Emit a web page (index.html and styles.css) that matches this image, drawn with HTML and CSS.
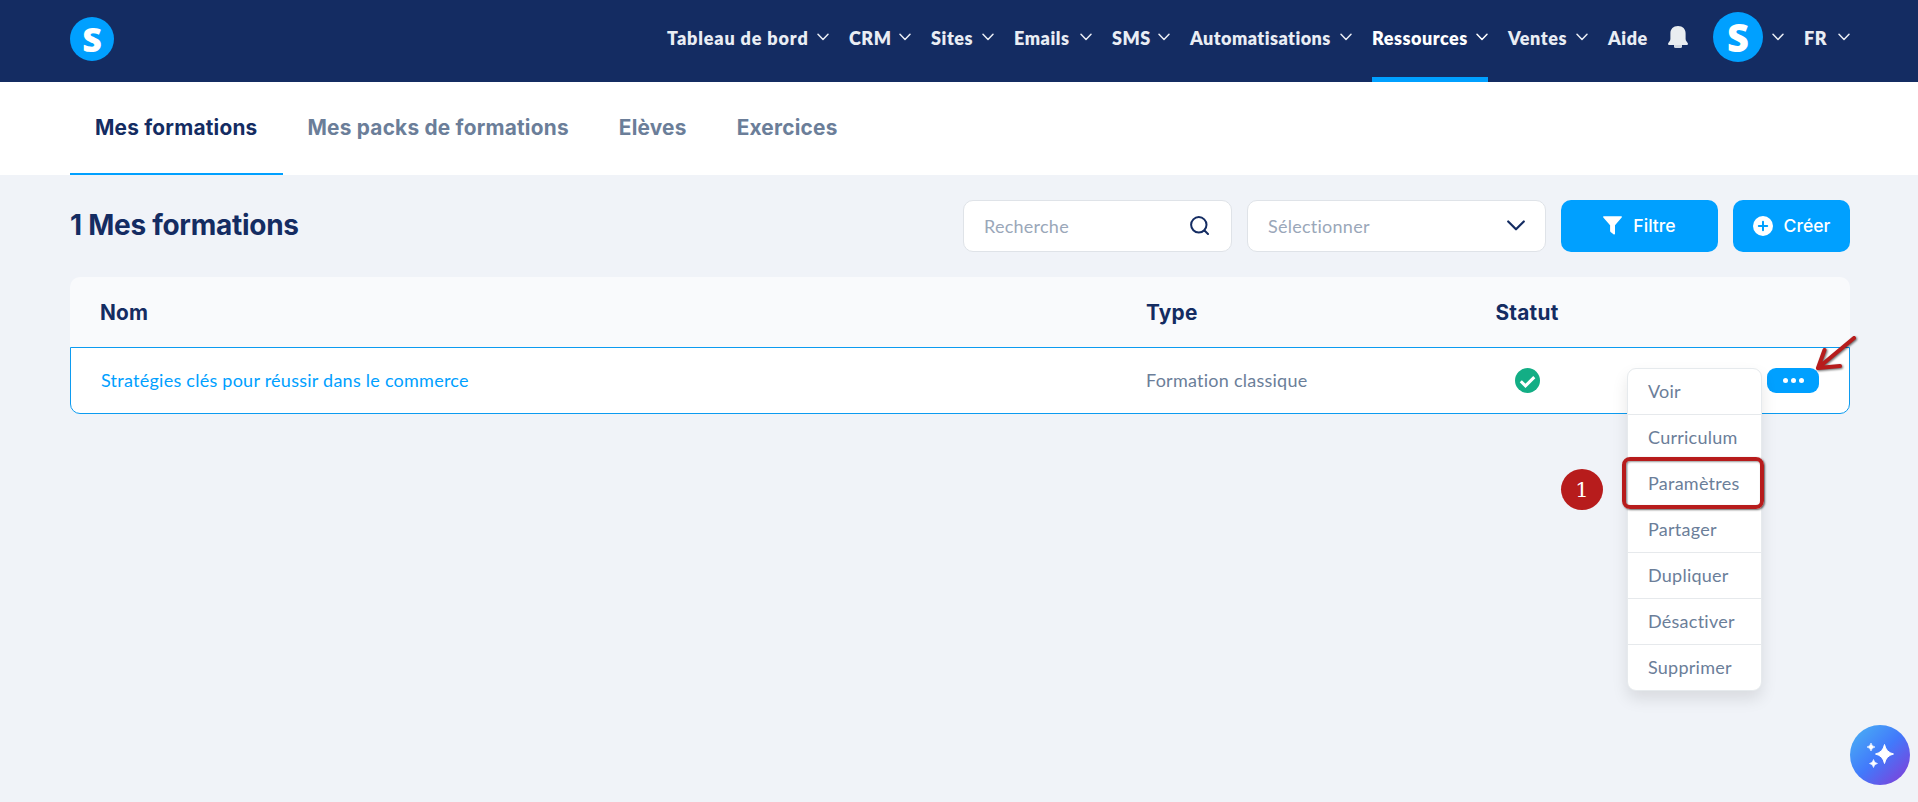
FILE: index.html
```html
<!DOCTYPE html>
<html lang="fr">
<head>
    <meta charset="UTF-8">
    <meta name="viewport" content="width=device-width, initial-scale=1.0">
    <title>Mes formations</title>
    <link rel="stylesheet" href="styles.css">
</head>
<body>
    <!-- Shared icons -->
    <svg class="sprite" aria-hidden="true">
        <symbol id="chevron" viewBox="0 0 12 8">
            <path d="M1 1.2L6 6.4L11 1.2" fill="none" stroke="currentColor" stroke-width="1.5" stroke-linecap="round" stroke-linejoin="round"/>
        </symbol>
    </svg>

    <!-- Top bar -->
    <header class="topbar">
        <a class="logo" href="#">S</a>
        <nav class="nav">
            <a class="nav-item nav-board" href="#"><span>Tableau de bord</span><svg class="chev"><use href="#chevron"/></svg></a>
            <a class="nav-item nav-crm" href="#"><span>CRM</span><svg class="chev"><use href="#chevron"/></svg></a>
            <a class="nav-item nav-sites" href="#"><span>Sites</span><svg class="chev"><use href="#chevron"/></svg></a>
            <a class="nav-item nav-emails" href="#"><span>Emails</span><svg class="chev"><use href="#chevron"/></svg></a>
            <a class="nav-item nav-sms" href="#"><span>SMS</span><svg class="chev"><use href="#chevron"/></svg></a>
            <a class="nav-item nav-auto" href="#"><span>Automatisations</span><svg class="chev"><use href="#chevron"/></svg></a>
            <a class="nav-item nav-res active" href="#"><span>Ressources</span><svg class="chev"><use href="#chevron"/></svg></a>
            <a class="nav-item nav-sales" href="#"><span>Ventes</span><svg class="chev"><use href="#chevron"/></svg></a>
            <a class="nav-item nav-help" href="#"><span>Aide</span></a>
            <a class="bell" href="#">
                <svg width="20" height="23" viewBox="0 0 20 23">
                    <path d="M6 18h8v2.500q0 1.500-1.500 1.500h-5Q6 22 6 20.500z" fill="#d3d9e2"/>
                    <path d="M10 0C14.800 0 17.600 3.200 17.600 7.400V13q0 1.600 1.200 2.800Q20 17 20 18q0 1-1.200 1H1.200Q0 19 0 18q0-1 1.200-2.200Q2.400 14.600 2.400 13V7.400C2.400 3.200 5.200 0 10 0z" fill="#e9edf0"/>
                </svg>
            </a>
            <a class="nav-item nav-user" href="#"><span class="logo avatar">S</span><svg class="chev"><use href="#chevron"/></svg></a>
            <a class="nav-item nav-lang" href="#"><span>FR</span><svg class="chev"><use href="#chevron"/></svg></a>
        </nav>
    </header>

    <!-- Tabs -->
    <div class="tabs">
        <a class="tab active" href="#">Mes formations</a>
        <a class="tab" href="#">Mes packs de formations</a>
        <a class="tab" href="#">Elèves</a>
        <a class="tab" href="#">Exercices</a>
    </div>

    <main class="content">
        <div class="toolbar">
            <h1>1 Mes formations</h1>
            <div class="field search">
                <span>Recherche</span>
                <svg width="19" height="19" viewBox="0 0 19 19" fill="none" stroke="#142c62" stroke-width="2" stroke-linecap="round">
                    <circle cx="8.800" cy="8.800" r="7.700"/>
                    <path d="M14.500 14.500L18 18"/>
                </svg>
            </div>
            <div class="field select">
                <span>Sélectionner</span>
                <svg width="18" height="11" viewBox="0 0 18 11" fill="none" stroke="#142c62" stroke-width="2.200" stroke-linecap="round" stroke-linejoin="round">
                    <path d="M1.200 1.500L9 9.300L16.800 1.500"/>
                </svg>
            </div>
            <button class="btn btn-filter">
                <svg width="19" height="19" viewBox="0 0 19 19"><path d="M.8.300h17.400q1.200.200.500 1.200L12 9.200v8.600q-.2 1.100-1.200.6L7.600 16q-.5-.4-.5-1V9.200L.3 1.500Q-.4.500.8.300z" fill="#fff"/></svg>
                <span>Filtre</span>
            </button>
            <button class="btn btn-create">
                <svg width="20" height="20" viewBox="0 0 20 20"><circle cx="10" cy="10" r="10" fill="#fff"/><path d="M10 5.800v8.400M5.800 10h8.400" stroke="#00a0ff" stroke-width="2" stroke-linecap="round"/></svg>
                <span>Créer</span>
            </button>
        </div>

        <!-- Course list -->
        <section class="table">
            <div class="row head">
                <div>Nom</div>
                <div>Type</div>
                <div class="center">Statut</div>
                <div></div>
            </div>
            <div class="row item">
                <a class="name" href="#">Stratégies clés pour réussir dans le commerce</a>
                <div class="type">Formation classique</div>
                <div class="center">
                    <svg class="check" width="25" height="25" viewBox="0 0 25 25"><circle cx="12.500" cy="12.500" r="12.500" fill="#13ae85"/><path d="M5.800 13.200L10.500 17.900L19.300 9.100" fill="none" stroke="#fff" stroke-width="3"/></svg>
                </div>
                <div class="actions">
                    <button class="more"><i></i><i></i><i></i></button>
                    <ul class="menu">
                        <li>Voir</li>
                        <li>Curriculum</li>
                        <li>Paramètres</li>
                        <li>Partager</li>
                        <li>Dupliquer</li>
                        <li>Désactiver</li>
                        <li>Supprimer</li>
                    </ul>
                    <!-- Guide marks -->
                    <div class="mark-box"></div>
                    <div class="mark-step">1</div>
                    <svg class="mark-arrow" width="44" height="38" viewBox="0 0 44 38" fill="none" stroke="#b71c1c" stroke-width="4" stroke-linecap="round" stroke-linejoin="round">
                        <path d="M40 4L4 34M10.500 16L4 34L26 32"/>
                    </svg>
                </div>
            </div>
        </section>
    </main>

    <!-- Assistant button -->
    <button class="assistant">
        <svg width="27" height="25" viewBox="0 0 27 25" fill="#fff">
            <path d="M17.500 1.500Q19 9.200 26.500 11Q19 12.800 17.500 20.500Q16 12.800 8.500 11Q16 9.200 17.500 1.500z" stroke="#fff" stroke-linejoin="round"/>
            <path d="M4 0Q4.700 3.300 8 4Q4.700 4.700 4 8Q3.300 4.700 0 4Q3.300 3.300 4 0z" stroke="#fff" stroke-width=".6"/>
            <path d="M6.500 16.500Q7.200 19.800 10.500 20.500Q7.200 21.200 6.500 24.500Q5.800 21.200 2.500 20.500Q5.800 19.800 6.500 16.500z" stroke="#fff" stroke-width=".6"/>
        </svg>
    </button>
</body>
</html>
```
FILE: styles.css
```css
* {
    box-sizing: border-box;
    margin: 0;
    padding: 0;
}

body {
    min-height: 802px;
    background: #f0f3f8;
    color: #6b7e99;
    font-family: Lato, "Open Sans", sans-serif;
    font-size: 18px;
    letter-spacing: 0.25px;
    overflow: hidden;
}

a {
    color: inherit;
    text-decoration: none;
}

button {
    border: none;
    cursor: pointer;
}

.sprite {
    display: none;
}

/* Top bar */
.topbar {
    display: flex;
    justify-content: space-between;
    height: 82px;
    padding: 0 68px 0 70px;
    background: #142c62;
    color: #e9edf4;
}

.logo {
    display: flex;
    align-items: center;
    justify-content: center;
    width: 44px;
    height: 44px;
    margin-top: 17px;
    border-radius: 50%;
    background: #00a0ff;
    color: #fff;
    font: 800 34px/1 "Open Sans", sans-serif;
    letter-spacing: 0;
}

.nav {
    display: flex;
    gap: 20px;
    letter-spacing: 0.55px;
}

.nav-item {
    display: flex;
    align-items: center;
    justify-content: space-between;
    height: 82px;
    padding-bottom: 7px;
    font-weight: 800;
    white-space: nowrap;
}

.nav-item.active {
    color: #fff;
    padding-bottom: 2px;
    border-bottom: 5px solid #00a0ff;
}

.chev {
    width: 12px;
    height: 8px;
    margin-bottom: 1px;
}

.nav-board {
    width: 162px;
    letter-spacing: 0.85px;
}

.nav-crm { width: 62px; }
.nav-sites { width: 63px; }
.nav-emails { width: 78px; }
.nav-sms { width: 58px; }
.nav-auto {
    width: 162px;
    letter-spacing: 0.45px;
}
.nav-res {
    width: 116px;
    letter-spacing: 0.5px;
}
.nav-sales { width: 80px; }
.nav-help { width: 40px; }
.nav-lang { width: 46px; }

.bell {
    width: 20px;
    padding-top: 26px;
}

.nav-user {
    width: 71px;
    margin-left: 5px;
    padding-bottom: 8px;
}

.avatar {
    width: 50px;
    height: 50px;
    margin: 0;
    font-size: 38px;
}

/* Tabs */
.tabs {
    display: flex;
    height: 93px;
    padding: 0 70px;
    background: #fff;
    font: 700 20.8px/92px Inter, sans-serif;
    letter-spacing: 0.235px;
}

.tab {
    padding: 0 25px;
    height: 93px;
}

.tab.active {
    color: #142c62;
    border-bottom: 2px solid #00a0ff;
}

/* Toolbar */
.content {
    padding: 25px 68px 0 70px;
}

.toolbar {
    display: flex;
    gap: 15px;
    height: 52px;
}

h1 {
    flex: 1;
    color: #142c62;
    font: 700 28px/51px Inter, sans-serif;
    letter-spacing: -0.27px;
}

.field {
    display: flex;
    align-items: center;
    justify-content: space-between;
    padding: 0 22px 1px 20px;
    border: 1px solid #dfe3e8;
    border-radius: 10px;
    background: #fff;
    color: #9aa7b9;
}

.search {
    width: 269px;
}

.select {
    width: 299px;
    padding-right: 20px;
}

.btn {
    display: flex;
    align-items: center;
    justify-content: center;
    padding-bottom: 1px;
    border-radius: 10px;
    background: #00a0ff;
    color: #fff;
    font: 500 17.6px Inter, sans-serif;
}

.btn-filter {
    width: 157px;
    gap: 11px;
}

.btn-create {
    width: 117px;
    gap: 11px;
}

/* Table */
.table {
    margin-top: 25px;
}

.row {
    display: grid;
    grid-template-columns: 1046px 312px 138px 1fr;
    align-items: center;
    padding-left: 30px;
}

.head {
    height: 70px;
    padding-top: 1px;
    border-radius: 10px 10px 0 0;
    background: #f9fafc;
    color: #142c62;
    font: 700 20.8px Inter, sans-serif;
    letter-spacing: 0.235px;
}

.item {
    grid-template-columns: 1045px 312px 138px 1fr;
    height: 67px;
    border: 1px solid #0c9bf0;
    border-radius: 0 0 10px 10px;
    background: #fff;
}

.center {
    text-align: center;
}

.check {
    display: block;
    margin: 0 auto;
}

.name,
.type {
    padding-bottom: 2px;
}

.name {
    color: #00a0ff;
}

/* Row menu */
.actions {
    position: relative;
    display: flex;
    justify-content: flex-end;
    padding-right: 30px;
}

.more {
    display: flex;
    align-items: center;
    justify-content: center;
    gap: 3px;
    width: 52px;
    height: 25px;
    border-radius: 9px;
    background: #00a0ff;
}

.more i {
    width: 5px;
    height: 5px;
    border-radius: 50%;
    background: #fff;
}

.menu {
    position: absolute;
    top: 0;
    right: 87px;
    width: 135px;
    border: 1px solid #e6eaed;
    border-radius: 9px;
    background: #fff;
    box-shadow: 0 8px 16px rgba(0, 0, 0, 0.1);
    list-style: none;
}

.menu li {
    height: 46px;
    padding-left: 20px;
    border-bottom: 1px solid #e6e9ec;
    line-height: 44px;
}

.menu li:last-child {
    height: 45px;
    border-bottom: none;
}

.mark-box {
    position: absolute;
    top: 89px;
    right: 85px;
    width: 142px;
    height: 52px;
    border: 4px solid #b71c1c;
    border-radius: 8px;
    box-shadow: 1px 1px 2px rgba(0, 0, 0, 0.6), inset 1px 1px 2px rgba(0, 0, 0, 0.4);
}

.mark-step {
    position: absolute;
    top: 101px;
    right: 246px;
    width: 42px;
    height: 41px;
    border-radius: 50%;
    background: #b71c1c;
    color: #fff;
    font: 21px/43px "DejaVu Serif", serif;
    letter-spacing: 0;
    text-align: center;
}

.mark-arrow {
    position: absolute;
    top: -34px;
    right: -9px;
    filter: drop-shadow(1px 1px 1px rgba(0, 0, 0, 0.6));
}

/* Assistant */
.assistant {
    position: fixed;
    right: 8px;
    bottom: 17px;
    display: flex;
    align-items: center;
    justify-content: center;
    width: 60px;
    height: 60px;
    border-radius: 50%;
    background: linear-gradient(135deg, #48a9f5 10%, #4279fb 50%, #7a45dc 90%);
}
```
